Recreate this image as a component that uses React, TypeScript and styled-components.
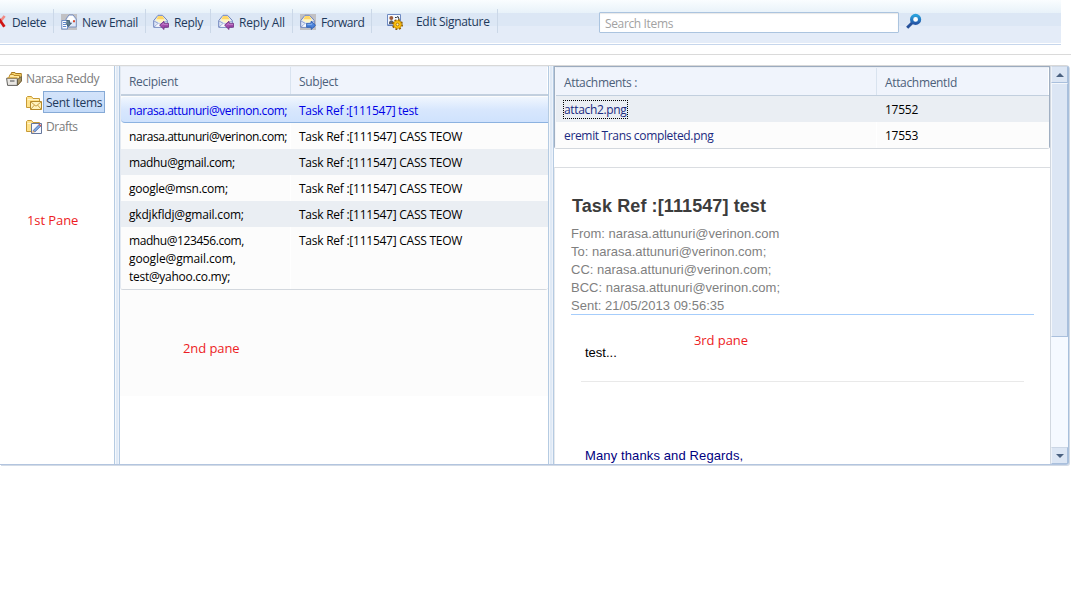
import React from "react";
import styled, { createGlobalStyle, css } from "styled-components";

const Global = createGlobalStyle`
  * { box-sizing: border-box; }
  body { margin: 0; background: #fff; overflow: hidden; }
`;

const Page = styled.div`
  position: relative;
  width: 1071px;
  height: 614px;
  overflow: hidden;
  display: flex;
  flex-direction: column;
  font: 12px/18px "Open Sans", "Noto Sans", sans-serif;
  color: #000;
`;

const Label = styled.span<{ $track?: number }>`
  white-space: nowrap;
  letter-spacing: ${(p) => p.$track ?? -0.3}px;
`;

const Toolbar = styled.header`
  display: flex;
  align-items: flex-start;
  width: 1061px;
  height: 45px;
  flex: none;
  border-bottom: 1px solid #c6d6ec;
  background: linear-gradient(#fafdff 0, #e8f2f9 13px, #dce7f5 13px, #dce7f5 26px, #e4ecf8 26px, #e4ecf8 43px, #fff 43px);
`;

const ToolButton = styled.div<{ $width: number; $inset?: number; $gap?: number; $rise?: number }>`
  display: flex;
  align-items: center;
  gap: ${(p) => p.$gap ?? 5}px;
  width: ${(p) => p.$width}px;
  height: 24px;
  margin-top: 9px;
  padding: 0 0 0 ${(p) => p.$inset ?? 7}px;
  border-right: 1px solid #cbd8e8;
  color: #1e395b;
  & > svg { flex: none; margin-top: 1px; }
  & > span { margin-top: ${(p) => 3 - (p.$rise ?? 0) * 2}px; }
`;

const SearchBox = styled.div`
  width: 300px;
  height: 21px;
  margin: 12px 0 0 101px;
  padding: 2px 5px;
  border: 1px solid #abc4df;
  border-radius: 1px;
  background: #fff;
  box-shadow: inset 0 1px 1px #e8e8e8;
  color: #a2a2a2;
`;

const SearchIconSlot = styled.div`
  margin: 13px 0 0 7px;
  height: 16px;
`;

const Rule = styled.div`
  flex: none;
  width: 1071px;
  height: 21px;
  padding-top: 9px;
  &::before { content: ""; display: block; height: 1px; background: #dadada; }
`;

const Splitter = styled.main`
  flex: none;
  display: flex;
  width: 1069px;
  height: 400px;
  margin-top: -1px;
  border-top: 1px solid #d8d8d8;
  border-right: 1px solid #a8c0dc;
  border-bottom: 1px solid #b3c5df;
  border-radius: 0 3px 3px 0;
  box-shadow: 1px 1px 0 #d3dbe6;
`;

const SplitBar = styled.div`
  flex: none;
  width: 6px;
  border: solid #b5cbe2;
  border-width: 0 1px;
  background: linear-gradient(90deg, #f4f7fb 1px, #e0eaf6 1px, #e0eaf6 3px, #edf2fa 3px);
`;

const FolderPane = styled.nav`
  flex: none;
  width: 114px;
`;

const Folder = styled.div<{ $depth: number; $active?: boolean }>`
  display: flex;
  align-items: center;
  height: 24px;
  padding-left: ${(p) => 6 + p.$depth * 20}px;
  color: #7b7b7b;
  & > svg { flex: none; margin-top: 1px; }
  & > span {
    margin-left: ${(p) => (p.$active ? 1 : 4)}px;
    padding-top: 1px;
    ${(p) =>
      p.$active &&
      css`
        height: 22px;
        padding: 2px 2px 0;
        border: 1px solid #86aad6;
        background: linear-gradient(#d3e3fa, #c4dbf9);
        color: #1e395b;
      `}
  }
`;

const ListPane = styled.section`
  flex: none;
  width: 428px;
`;

const ListBody = styled.div`
  height: 330px;
  background: #fcfcfc;
`;

const Grid = styled.div`
  border-bottom: 1px solid #d3d8de;
  border-left: 1px solid #e3e9f1;
  border-radius: 0 0 3px 3px;
  overflow: hidden;
`;

const HeadRow = styled.div<{ $cols: string; $thin?: boolean }>`
  display: grid;
  grid-template-columns: ${(p) => p.$cols};
  height: ${(p) => (p.$thin ? 29 : 30)}px;
  border-top: 1px solid #e8edf4;
  border-bottom: ${(p) => (p.$thin ? 1 : 2)}px solid #c2cfde;
  background: #f0f4fc;
  color: #4c607a;
`;

const HeadCell = styled.div<{ $thin?: boolean }>`
  padding: 6px 8px 0;
  border-right: 1px solid #d9e3ef;
  &:last-child { border-right: 1px solid #fff; }
`;

const MailRow = styled.div<{ $cols: string; $tone?: "alt" | "selected" }>`
  display: grid;
  grid-template-columns: ${(p) => p.$cols};
  min-height: 26px;
  background: #fcfcfc;
  ${(p) => p.$tone === "alt" && css`background: #eaeef3;`}
  ${(p) =>
    p.$tone === "selected" &&
    css`
      height: 26px;
      margin-top: 1px;
      border-bottom: 1px solid #8cb2e0;
      border-radius: 3px 0 0 4px;
      background: linear-gradient(#f0f6fe, #d8e7fd 50%, #cfe2fd);
      color: #0000e6;
    `}
`;

const Cell = styled.div<{ $plain?: boolean }>`
  display: flex;
  flex-direction: column;
  padding: 5px 8px 3px;
  border-right: 1px solid ${(p) => (p.$plain ? "transparent" : "#fff")};
`;

const ReadPane = styled.section`
  flex: none;
  width: 496px;
  overflow: hidden;
`;

const Attachments = styled.div`
  border: 1px solid #a0afc2;
  border-bottom-color: #d3d8de;
  border-top-color: #9cabbf;
  border-radius: 0 0 3px 3px;
`;

const AttachmentRows = styled.div`
  padding-left: 1px;
  background: #f4f6fa;
`;

const FileLink = styled.span<{ $focus?: boolean }>`
  align-self: flex-start;
  color: #1b2a80;
  white-space: nowrap;
  letter-spacing: -0.34px;
  height: 17px;
  ${(p) => p.$focus && css`outline: 1px dotted #000; outline-offset: 0;`}
`;

const Message = styled.article`
  height: 297px;
  margin-top: 18px;
  padding: 26px 16px 0 16px;
  border-top: 1px solid #dadde1;
  border-left: 1px solid #e6e9ee;
  overflow: hidden;
  font: 13px/18px "Liberation Sans", Arial, sans-serif;
`;

const MessageTitle = styled.h1`
  margin: 0 0 7px 1px;
  font-size: 18px;
  line-height: 24px;
  letter-spacing: 0.1px;
  color: #3c3c3c;
`;

const MessageMeta = styled.div`
  height: 90px;
  border-bottom: 1px solid #a6cdfb;
  color: #7f7f7f;
`;

const MessageText = styled.div`
  margin: 0 10px;
  padding: 29px 4px 0;
  height: 67px;
  border-bottom: 1px solid #e9e9e9;
`;

const SignOff = styled.div`
  padding: 65px 0 0 14px;
  letter-spacing: 0.12px;
  color: #000080;
`;

const ScrollBar = styled.div`
  flex: none;
  display: flex;
  flex-direction: column;
  width: 18px;
  border-left: 1px solid #d2d8e0;
  background: #f5f9ff;
`;

const ScrollArrow = styled.div`
  display: flex;
  align-items: center;
  justify-content: center;
  height: 17px;
  border: 1px solid #a9bfdc;
  border-top-color: #cbd6e5;
  border-left-color: #eef2f8;
  background: #dce6f4;
`;

const ScrollThumb = styled.div`
  height: 254px;
  border: 1px solid #a9bfdc;
  border-top-color: #f4f7fb;
  border-left: 1px solid #f4f7fb;
  background: #dce6f4;
`;

const ScrollTrack = styled.div`
  flex: 1;
`;

const Note = styled.div<{ $x: number; $y: number }>`
  position: absolute;
  left: ${(p) => p.$x}px;
  top: ${(p) => p.$y}px;
  font-size: 13px;
  line-height: 18px;
  letter-spacing: -0.08px;
  color: #ed1c24;
`;

const DeleteIcon = () => (
  <svg width="6" height="16" viewBox="0 0 6 16">
    <path d="M-4 13 L4.6 2" stroke="#f08a84" strokeWidth="2.6" />
    <path d="M-3 2 L4.4 12.8" stroke="#cf1414" strokeWidth="2.8" />
  </svg>
);

const Envelope = () => (
  <>
    <path d="M.7 6.6 L5 1.3 H9.5 L14.3 6.4 V13.3 H.7Z" fill="#dfe7f7" stroke="#7186bd" />
    <path d="M2.5 6.5 L5.3 2 H9.4 L12.6 6.5 L7.5 9Z" fill="#fff5c4" />
    <path d="M3.3 5.3 L5.3 2 H9.4 L11.6 5.2Z" fill="#ffd766" />
    <path d="M1 7 L5.5 9.5 H9.5 L14 7 M1 13 L5.5 9.5" fill="none" stroke="#92a3cf" />
    <path d="M5.5 9.5 L2 12.8 H9.5 V9.5Z" fill="#f7faff" />
  </>
);

const ReplyIcon = () => (
  <svg width="16" height="16" viewBox="0 0 16 16">
    <Envelope />
    <path d="M6.6 11.2 L11 7.2 V9.4 H15.6 V13.2 H11 V15.5Z" fill="#a04bab" stroke="#6d2b7c" strokeWidth=".8" />
    <path d="M8.5 11 L10.5 9.3 V10.3 H15" fill="none" stroke="#cf8fd5" strokeWidth=".8" />
  </svg>
);

const ForwardIcon = () => (
  <svg width="16" height="16" viewBox="0 0 16 16">
    <path d="M0 0H16V16H0Z" fill="#c1c1c4" />
    <Envelope />
    <path d="M15.6 11.2 L11.2 7.2 V9.4 H6.6 V13.2 H11.2 V15.5Z" fill="#4b83dc" stroke="#2356aa" strokeWidth=".8" />
    <path d="M7.3 10.3 H11.8 V9.3" fill="none" stroke="#9cc4f8" strokeWidth=".8" />
  </svg>
);

const NewMailIcon = () => (
  <svg width="16" height="16" viewBox="0 0 16 16">
    <path d="M0 0H16V16H0Z" fill="#c1c1c4" />
    <path d="M5 5 L8 .9 H12 L15.3 5 V13 H5Z" fill="#dfe8f8" stroke="#7c91bf" />
    <path d="M6 5.5 L8.3 2 H11.8 L14 5.5 L10 7.5Z" fill="#fff" />
    <path d="M12 6.2H14V8.2H12Z" fill="#d9482b" />
    <path d="M.8 6.5H6.5V15H.8Z" fill="#fff" stroke="#6f8fc9" />
    <path d="M2 8.5H5.2M2 10.5H5.2M2 12.5H5.2" stroke="#5f87cc" />
    <path d="M5.5 6.5H8.5V9H10.5L7.5 12.5L5 9.5" fill="#5e7c8e" stroke="#2d475c" strokeWidth=".7" />
  </svg>
);

const SignatureIcon = () => (
  <svg width="16" height="16" viewBox="0 0 16 16">
    <path d="M.5 .5H13.5V11.5H.5Z" fill="#f4f8ff" stroke="#6e8ac2" />
    <path d="M1 11H13" stroke="#4c6ba8" />
    <circle cx="4.3" cy="4" r="2" fill="#9c5b3b" />
    <path d="M2 10V8Q4.3 4.7 6.8 8V10Z" fill="#5b5f69" />
    <path d="M8 3.5H9.5L11 2.5L12 5" fill="none" stroke="#30343c" />
    <circle cx="10.5" cy="10.5" r="4.5" fill="none" stroke="#8a5a00" strokeWidth="2" strokeDasharray="1.9 1.63" />
    <circle cx="10.5" cy="10.5" r="3.9" fill="#ffc40c" stroke="#c48600" strokeWidth=".7" />
    <circle cx="10.5" cy="10.5" r="1.4" fill="#fff3b5" stroke="#9a6500" strokeWidth=".8" />
  </svg>
);

const SearchIcon = () => (
  <svg width="16" height="16" viewBox="0 0 16 16">
    <defs>
      <linearGradient id="lens" x1="0" y1="0" x2="0" y2="1">
        <stop offset="0" stopColor="#2ba1dc" />
        <stop offset="1" stopColor="#2457a8" />
      </linearGradient>
    </defs>
    <path d="M1.2 14.8 L6.5 9.5" stroke="#26519a" strokeWidth="3" />
    <circle cx="9.6" cy="6.4" r="4" fill="#fff" stroke="url(#lens)" strokeWidth="3.2" />
  </svg>
);

const MailboxIcon = () => (
  <svg width="16" height="16" viewBox="0 0 16 16">
    <path d="M4.5 5 L5.5 1.5 H9 L9.5 2.5 H15.3 V10 L12 14" fill="#f8d46b" stroke="#a7791f" />
    <path d="M2.7 7 L4 3.5 H7.5 L8 4.5 H13.5 V11 L11 14" fill="#ffe9a0" stroke="#b98a2c" />
    <path d="M.6 7.3H11.3V14.4H1.6Z" fill="#e9e7e3" stroke="#62615e" />
    <path d="M1.3 6.8H11.3" stroke="#dba73b" />
    <path d="M11.5 14.3 L15.4 10 V5.5 L11.5 8.5Z" fill="#a99667" stroke="#5c5440" strokeWidth=".8" />
    <path d="M4 10H8.5" stroke="#777" strokeWidth="1.4" />
  </svg>
);

const FolderShape = () => (
  <>
    <path d="M.5 12.5V2.5L1.5 1.5H5.5L7 3.5H13.5V12.5Z" fill="#ffe28a" stroke="#c79a35" />
    <path d="M1.5 4.5H12.7" stroke="#fff5cf" />
  </>
);

const SentIcon = () => (
  <svg width="16" height="16" viewBox="0 0 16 16">
    <FolderShape />
    <path d="M4.5 6.5H15.5V14.5H4.5Z" fill="#fff3be" stroke="#b58a2a" />
    <path d="M4.8 6.8L10 11.2L15.2 6.8M4.8 14.2L8.5 10M15.2 14.2L11.5 10" fill="none" stroke="#c99f45" />
  </svg>
);

const DraftIcon = () => (
  <svg width="16" height="16" viewBox="0 0 16 16">
    <FolderShape />
    <path d="M5.5 4.5H15.5V14.5H5.5Z" fill="#f5f8ff" stroke="#65779c" />
    <path d="M7.2 11.5L13.2 5.4L14.8 7L8.8 13Z" fill="#7fabe8" stroke="#37538c" strokeWidth=".7" />
    <path d="M6 14L7 11.4L8.7 13.1Z" fill="#e5a35b" />
    <path d="M12.6 5.6L13.5 4.7L15.3 6.5L14.4 7.4Z" fill="#d8574f" />
  </svg>
);

const Arrow = ({ down }: { down?: boolean }) => (
  <svg width="8" height="4" viewBox="0 0 8 4">
    <path d={down ? "M0 0H8L4 4Z" : "M0 4H8L4 0Z"} fill="#4a6180" />
  </svg>
);

type Line = [string, number];
const mails: { to: Line[]; subject: Line; tone?: "alt" | "selected" }[] = [
  { to: [["narasa.attunuri@verinon.com;", -0.43]], subject: ["Task Ref :[111547] test", -0.31], tone: "selected" },
  { to: [["narasa.attunuri@verinon.com;", -0.43]], subject: ["Task Ref :[111547] CASS TEOW", -0.25] },
  { to: [["madhu@gmail.com;", -0.34]], subject: ["Task Ref :[111547] CASS TEOW", -0.25], tone: "alt" },
  { to: [["google@msn.com;", -0.25]], subject: ["Task Ref :[111547] CASS TEOW", -0.25] },
  { to: [["gkdjkfldj@gmail.com;", -0.18]], subject: ["Task Ref :[111547] CASS TEOW", -0.25], tone: "alt" },
  {
    to: [["madhu@123456.com,", -0.42], ["google@gmail.com,", -0.12], ["test@yahoo.co.my;", -0.28]],
    subject: ["Task Ref :[111547] CASS TEOW", -0.25],
  },
];

const files = [
  { name: "attach2.png", id: "17552" },
  { name: "eremit Trans completed.png", id: "17553" },
];

const MAIL_COLS = "170px 1fr";
const FILE_COLS = "321px 1fr";

export default function App() {
  return (
    <Page>
      <Global />
      <Toolbar>
        <ToolButton $width={54} $inset={0} $gap={6}><DeleteIcon /><Label $track={-0.35}>Delete</Label></ToolButton>
        <ToolButton $width={92}><NewMailIcon /><Label>New Email</Label></ToolButton>
        <ToolButton $width={65}><ReplyIcon /><Label>Reply</Label></ToolButton>
        <ToolButton $width={82}><ReplyIcon /><Label $track={-0.15}>Reply All</Label></ToolButton>
        <ToolButton $width={79}><ForwardIcon /><Label $track={-0.45}>Forward</Label></ToolButton>
        <ToolButton $width={126} $inset={15} $gap={13} $rise={1}><SignatureIcon /><Label>Edit Signature</Label></ToolButton>
        <SearchBox><Label $track={-0.36}>Search Items</Label></SearchBox>
        <SearchIconSlot><SearchIcon /></SearchIconSlot>
      </Toolbar>
      <Rule />
      <Splitter>
        <FolderPane>
          <Folder $depth={0}><MailboxIcon /><Label $track={-0.38}>Narasa Reddy</Label></Folder>
          <Folder $depth={1} $active><SentIcon /><Label>Sent Items</Label></Folder>
          <Folder $depth={1}><DraftIcon /><Label $track={-0.45}>Drafts</Label></Folder>
        </FolderPane>
        <SplitBar />
        <ListPane>
          <ListBody>
            <Grid>
              <HeadRow $cols={MAIL_COLS}>
                <HeadCell><Label>Recipient</Label></HeadCell>
                <HeadCell><Label>Subject</Label></HeadCell>
              </HeadRow>
              {mails.map((m, i) => (
                <MailRow key={i} $cols={MAIL_COLS} $tone={m.tone}>
                  <Cell $plain={!!m.tone}>
                    {m.to.map(([text, track]) => <Label key={text} $track={track}>{text}</Label>)}
                  </Cell>
                  <Cell $plain><Label $track={m.subject[1]}>{m.subject[0]}</Label></Cell>
                </MailRow>
              ))}
            </Grid>
          </ListBody>
        </ListPane>
        <SplitBar />
        <ReadPane>
          <Attachments>
            <AttachmentRows>
              <HeadRow $cols={FILE_COLS} $thin>
                <HeadCell $thin><Label $track={-0.34}>Attachments :</Label></HeadCell>
                <HeadCell $thin><Label $track={-0.34}>AttachmentId</Label></HeadCell>
              </HeadRow>
              {files.map((f, i) => (
                <MailRow key={f.id} $cols={FILE_COLS} $tone={i === 0 ? "alt" : undefined}>
                  <Cell $plain={i === 0}><FileLink $focus={i === 0}>{f.name}</FileLink></Cell>
                  <Cell $plain><Label $track={-0.26}>{f.id}</Label></Cell>
                </MailRow>
              ))}
            </AttachmentRows>
          </Attachments>
          <Message>
            <MessageTitle>Task Ref :[111547] test</MessageTitle>
            <MessageMeta>
              <div>From: narasa.attunuri@verinon.com</div>
              <div>To: narasa.attunuri@verinon.com;</div>
              <div>CC: narasa.attunuri@verinon.com;</div>
              <div>BCC: narasa.attunuri@verinon.com;</div>
              <div>Sent: 21/05/2013 09:56:35</div>
            </MessageMeta>
            <MessageText>test...</MessageText>
            <SignOff>Many thanks and Regards,</SignOff>
          </Message>
        </ReadPane>
        <ScrollBar>
          <ScrollArrow><Arrow /></ScrollArrow>
          <ScrollThumb />
          <ScrollTrack />
          <ScrollArrow><Arrow down /></ScrollArrow>
        </ScrollBar>
      </Splitter>
      <Note $x={27} $y={211}>1st Pane</Note>
      <Note $x={183} $y={339}>2nd pane</Note>
      <Note $x={694} $y={331}>3rd pane</Note>
    </Page>
  );
}
